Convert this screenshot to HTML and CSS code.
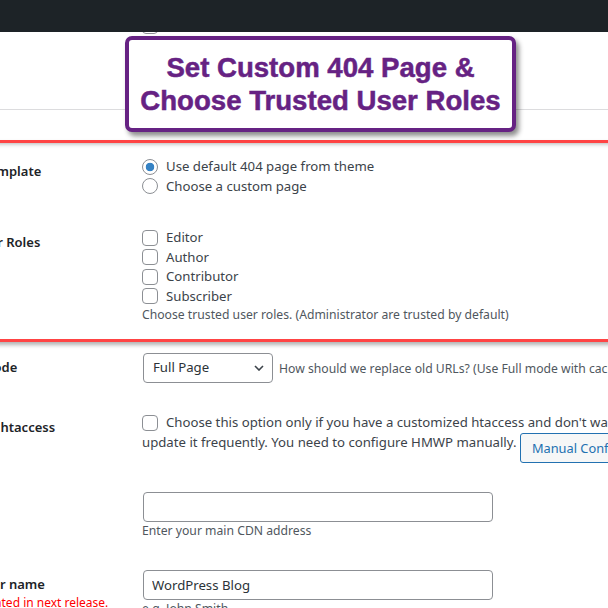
FILE: index.html
```html
<!DOCTYPE html>
<html>
<head>
<meta charset="utf-8">
<title>Settings</title>
<link rel="stylesheet" href="styles.css">
</head>
<body>
<div class="adminbar"></div>
<main class="wrap">
  <div class="row row-first">
    <div class="label"></div>
    <div class="field"><span class="checkbox"></span></div>
  </div>
  <section class="highlight">
    <div class="row row-404">
      <div class="label">404 Page Template</div>
      <div class="field">
        <label class="opt"><span class="radio checked"></span>Use default 404 page from theme</label>
        <label class="opt"><span class="radio"></span>Choose a custom page</label>
      </div>
    </div>
    <div class="row row-roles">
      <div class="label">Trusted User Roles</div>
      <div class="field">
        <label class="opt"><span class="checkbox"></span>Editor</label>
        <label class="opt"><span class="checkbox"></span>Author</label>
        <label class="opt"><span class="checkbox"></span>Contributor</label>
        <label class="opt"><span class="checkbox"></span>Subscriber</label>
        <p class="desc">Choose trusted user roles. (Administrator are trusted by default)</p>
      </div>
    </div>
  </section>
  <div class="row row-mode">
    <div class="label">Mapping Mode</div>
    <div class="field inline">
      <div class="select"><span>Full Page</span><svg class="chev" width="10" height="6" viewBox="0 0 10 6"><path d="M1 1l4 4 4-4" fill="none" stroke="#3c434a" stroke-width="1.6"/></svg></div>
      <span class="desc">How should we replace old URLs? (Use Full mode with cache plugins)</span>
    </div>
  </div>
  <div class="row row-ht">
    <div class="label">Skip update htaccess</div>
    <div class="field">
      <label class="opt nowrap"><span class="checkbox"></span>Choose this option only if you have a customized htaccess and don't want the plugin to</label>
      <div class="line2">update it frequently. You need to configure HMWP manually. <button class="btn">Manual Configuration</button></div>
    </div>
  </div>
  <div class="row row-cdn">
    <div class="label">CDN URL</div>
    <div class="field">
      <input class="input" type="text" value="">
      <p class="desc">Enter your main CDN address</p>
    </div>
  </div>
  <div class="row row-name">
    <div class="label">Website User name<span class="warn">It will be updated in next release.</span></div>
    <div class="field">
      <input class="input" type="text" value="WordPress Blog">
      <p class="desc">e.g. John Smith</p>
    </div>
  </div>
</main>
<div class="callout"><p>Set Custom 404 Page &amp;<br>Choose Trusted User Roles</p></div>
</body>
</html>
```
FILE: styles.css
```css
html, body {
  margin: 0;
  height: 100%;
  overflow: hidden;
  background: #fff;
}
body {
  font-family: "Noto Sans", "Open Sans", sans-serif;
  font-size: 13.2px;
  color: #3c434a;
}
.adminbar {
  position: fixed;
  top: 0;
  left: 0;
  right: 0;
  height: 32px;
  background: #1d2327;
  z-index: 5;
}
.wrap {
  margin-left: -78px;
  width: 1000px;
}
.row {
  display: grid;
  grid-template-columns: 220px 1fr;
}
.label {
  font-size: 13px;
  font-weight: 600;
  color: #1d2327;
  padding-top: 5px;
  line-height: 19.5px;
  white-space: nowrap;
}
.field {
  line-height: 19.5px;
}
.row-first {
  height: 110px;
  box-sizing: border-box;
  border-bottom: 1px solid #dcdcde;
  padding-top: 18px;
}
.row-first .checkbox {
  display: block;
}
.highlight {
  margin-top: 30px;
  border-top: 3px solid #f44;
  border-bottom: 3px solid #f44;
  box-shadow: inset 0 3px 4px -2px rgba(0, 0, 0, 0.3), 0 3px 4px rgba(0, 0, 0, 0.3);
  padding: 14px 0 16px;
}
.row-roles {
  margin-top: 32px;
}
.opt {
  display: flex;
  align-items: center;
  gap: 8px;
  height: 19.5px;
  white-space: nowrap;
}
.radio, .checkbox {
  width: 16px;
  height: 16px;
  box-sizing: border-box;
  border: 1px solid #8c8f94;
  background: #fff;
  flex: none;
}
.radio {
  border-radius: 50%;
}
.radio.checked {
  background: radial-gradient(circle, #3582c4 0 4px, #fff 4.6px);
}
.checkbox {
  border-radius: 4px;
}
.desc {
  margin: 0;
  font-size: 12.2px;
  line-height: 17px;
  color: #50575e;
  white-space: nowrap;
}
.row-mode {
  margin-top: 11px;
}
.field.inline {
  display: flex;
  align-items: center;
  gap: 6px;
}
.select {
  width: 130px;
  height: 30px;
  box-sizing: border-box;
  border: 1px solid #8c8f94;
  border-radius: 4px;
  display: flex;
  align-items: center;
  justify-content: space-between;
  padding: 0 8px 0 9px;
  margin-left: 1px;
  color: #2c3338;
  flex: none;
}
.row-ht {
  margin-top: 30px;
}
.line2 {
  white-space: nowrap;
}
.btn {
  display: inline-block;
  vertical-align: top;
  height: 30px;
  box-sizing: border-box;
  border: 1px solid #2271b1;
  border-radius: 3px;
  background: #f6f7f7;
  color: #2271b1;
  padding: 0 11px;
  font-family: inherit;
  font-size: 12.8px;
  line-height: 28px;
}
.row-cdn {
  margin-top: 29px;
}
.input {
  display: block;
  width: 350px;
  height: 30px;
  box-sizing: border-box;
  border: 1px solid #8c8f94;
  border-radius: 4px;
  padding: 0 8px;
  margin: 0 0 0 1px;
  font-family: inherit;
  font-size: 13.2px;
  color: #2c3338;
  background: #fff;
}
.row-name {
  margin-top: 31px;
}
.warn {
  display: block;
  font-weight: 400;
  font-size: 12px;
  line-height: 17px;
  color: #f00;
}
.callout {
  position: absolute;
  left: 125px;
  top: 36px;
  width: 391px;
  height: 96px;
  box-sizing: border-box;
  border: 4px solid #662283;
  border-radius: 7px;
  background: #fff;
  box-shadow: 3px 4px 5px rgba(0, 0, 0, 0.45);
  display: flex;
  align-items: center;
  justify-content: center;
  z-index: 6;
}
.callout p {
  margin: 0;
  font-family: "Liberation Sans", Arial, sans-serif;
  font-weight: 700;
  font-size: 27.6px;
  line-height: 33px;
  color: #662283;
  -webkit-text-stroke: 0.5px #662283;
  text-align: center;
}
```
